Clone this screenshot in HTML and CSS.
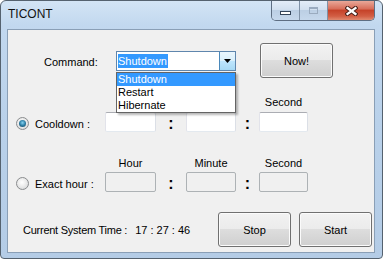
FILE: index.html
```html
<!DOCTYPE html>
<html lang="en">
  <head>
    <title>TICONT</title>
    <link rel="stylesheet" href="styles.css">
  </head>
  <body>
    <div class="window">
      <div class="titlebar">
        <span class="title">TICONT</span>
        <div class="caption-btns">
          <span class="cbtn min"><span class="min-glyph"></span></span>
          <span class="cbtn max"><span class="max-glyph"></span></span>
          <span class="cbtn close">
            <svg width="13" height="10" viewBox="0 0 13 10">
              <path d="M2.5 2 L10.5 8 M10.5 2 L2.5 8" stroke="#4a2119" stroke-width="4.2" stroke-linecap="square" fill="none" />
              <path d="M2.5 2 L10.5 8 M10.5 2 L2.5 8" stroke="#fff" stroke-width="2.2" stroke-linecap="square" fill="none" />
            </svg>
          </span>
        </div>
      </div>

      <div class="client">
        <div class="cmd-row">
          <span class="cmd-label">Command:</span>
          <div class="combo">
            <span class="combo-text"><span class="sel">Shutdown</span></span>
            <span class="combo-arrow">
              <svg width="7" height="4" viewBox="0 0 7 4"><path d="M0 0 H7 L3.5 4 Z" fill="#000" /></svg>
            </span>
            <ul class="combo-list">
              <li class="hot">Shutdown</li>
              <li>Restart</li>
              <li>Hibernate</li>
            </ul>
          </div>
          <button class="btn now">Now!</button>
        </div>

        <div class="timer cool">
          <!-- hour / minute labels sit under the open dropdown -->
          <span class="head h1 covered">Hour</span>
          <span class="head h2 covered">Minute</span>
          <span class="head h3">Second</span>
          <label class="opt"><span class="radio on"></span>Cooldown :</label>
          <span class="box"></span>
          <span class="colon">:</span>
          <span class="box"></span>
          <span class="colon">:</span>
          <span class="box"></span>
        </div>

        <div class="timer exact">
          <span class="head h1">Hour</span>
          <span class="head h2">Minute</span>
          <span class="head h3">Second</span>
          <label class="opt"><span class="radio"></span>Exact hour :</label>
          <span class="box off"></span>
          <span class="colon">:</span>
          <span class="box off"></span>
          <span class="colon">:</span>
          <span class="box off"></span>
        </div>

        <div class="bottom-row">
          <span class="sys-label">Current System Time :</span>
          <span class="sys-time">17 : 27 : 46</span>
          <button class="btn stop">Stop</button>
          <button class="btn start">Start</button>
        </div>
      </div>
    </div>
  </body>
</html>
```

FILE: styles.css
```css
body {
  margin: 0;
  font-family: "Liberation Sans", Arial, sans-serif;
  font-size: 11px;
  color: #000;
}
.window {
  box-sizing: border-box;
  width: 383px;
  height: 259px;
  border: 1px solid #55626f;
  border-radius: 6px 6px 4px 4px;
  background: linear-gradient(to bottom, #d3e4f5 0px, #c2d8ef 24px, #b9d1ea 120px, #b4cce6 100%);
  display: flex;
  flex-direction: column;
  overflow: hidden;
}
.titlebar {
  height: 28px;
  flex-shrink: 0;
  display: flex;
  align-items: flex-start;
}
.title {
  margin: 6px 0 0 7px;
  font-size: 12px;
  line-height: 14px;
  color: #111;
}
.caption-btns {
  margin-left: auto;
  margin-right: 7px;
  height: 19px;
  display: flex;
  border: 1px solid #5e6e82;
  border-top: none;
  border-radius: 0 0 5px 5px;
  overflow: hidden;
}
.cbtn {
  display: flex;
  justify-content: center;
  align-items: center;
  height: 19px;
}
.min,
.max {
  width: 27px;
  background: linear-gradient(to bottom, #e3edf8 0%, #d2e0ef 45%, #bccfe4 50%, #c6d8ec 100%);
  border-right: 1px solid #7f91a6;
}
.min {
  align-items: flex-end;
}
.min-glyph {
  width: 9px;
  height: 2px;
  margin-bottom: 5px;
  border: 1px solid #34455a;
  background: #fff;
}
.max-glyph {
  width: 7px;
  height: 5px;
  border: 1px solid #9aabbf;
  box-shadow: inset 0 1px 0 #9aabbf;
  margin-bottom: 1px;
}
.close {
  width: 46px;
  background: linear-gradient(to bottom, #e9a899 0%, #d8705c 40%, #c6432a 50%, #d25e44 80%, #e08a70 100%);
}

.client {
  flex: 1;
  margin: 0 7px 5px 6px;
  border: 1px solid #8a9fb6;
  background: #f0f0f0;
  padding-top: 13px;
  display: flex;
  flex-direction: column;
}
.cmd-row {
  height: 35px;
  display: flex;
  align-items: center;
}
.cmd-label {
  margin-left: 36px;
  width: 72px;
  padding-top: 2px;
}
.combo {
  position: relative;
  box-sizing: border-box;
  width: 120px;
  height: 20px;
  border: 1px solid #5f86ad;
  background: #fff;
  display: flex;
}
.combo-text {
  flex: 1;
  display: flex;
  align-items: center;
  padding-left: 1px;
}
.sel {
  background: #3399ff;
  color: #fff;
  line-height: 14px;
  padding-right: 1px;
}
.combo-arrow {
  width: 15px;
  display: flex;
  justify-content: center;
  align-items: center;
  border-left: 1px solid #4a88ba;
  background: linear-gradient(to bottom, #eaf6fd 0%, #d9f0fc 50%, #bee6fd 50%, #a7d9f5 100%);
}
.combo-list {
  position: absolute;
  z-index: 2;
  top: 20px;
  left: -1px;
  width: 120px;
  box-sizing: border-box;
  margin: 0;
  padding: 0;
  list-style: none;
  background: #fff;
  border: 1px solid #646464;
  box-shadow: 2px 2px 2px rgba(0, 0, 0, 0.28);
}
.combo-list li {
  line-height: 13px;
  padding-left: 1px;
}
.combo-list li.hot {
  background: #3399ff;
  color: #fff;
}
.btn {
  box-sizing: border-box;
  width: 73px;
  height: 35px;
  padding: 0;
  font-family: "Liberation Sans", Arial, sans-serif;
  font-size: 11px;
  color: #000;
  border: 1px solid #707070;
  border-radius: 3px;
  background: linear-gradient(to bottom, #f2f2f2 0%, #ebebeb 50%, #dddddd 50%, #cfcfcf 100%);
  box-shadow: inset 0 0 0 1px #fbfbfb;
}
.now {
  margin-left: 24px;
}

.timer {
  display: grid;
  grid-template-columns: 97px 51px 30px 50px 23px 49px;
  grid-template-rows: 14px 20px;
  row-gap: 3px;
}
.cool {
  margin-top: 17px;
}
.exact {
  margin-top: 24px;
  row-gap: 2px;
}
.head {
  grid-row: 1;
  text-align: center;
  line-height: 14px;
}
.head.covered {
  visibility: hidden;
}
.h1 {
  grid-column: 2;
}
.h2 {
  grid-column: 4;
}
.h3 {
  grid-column: 6;
}
.timer > :not(.head) {
  grid-row: 2;
}
.opt {
  display: flex;
  align-items: center;
  padding-left: 8px;
  padding-top: 3px;
}
.radio {
  position: relative;
  box-sizing: border-box;
  width: 13px;
  height: 13px;
  margin-right: 6px;
  border-radius: 50%;
  border: 1px solid #8a8c8e;
  background: radial-gradient(circle at 45% 40%, #ffffff 0%, #eeeeee 40%, #cfd1d3 100%);
}
.radio.on::after {
  content: "";
  position: absolute;
  left: 2px;
  top: 2px;
  width: 7px;
  height: 7px;
  border-radius: 50%;
  background: radial-gradient(circle at 50% 40%, #86d3f2 0%, #2d7fa6 50%, #173f55 100%);
}
.box {
  box-sizing: border-box;
  height: 20px;
  background: #fff;
  border: 1px solid;
  border-color: #abadb3 #dbdfe6 #e3e9ef #e2e3ea;
  border-radius: 2px;
}
.box.off {
  background: #f0f0f0;
  border-color: #adb2b5;
}
.colon {
  text-align: center;
  font-size: 16px;
  font-weight: bold;
  line-height: 24px;
}

.bottom-row {
  margin-top: 20px;
  height: 35px;
  display: flex;
  align-items: center;
}
.sys-label {
  margin-left: 15px;
  letter-spacing: -0.25px;
}
.sys-time {
  margin-left: 8px;
}
.stop {
  margin-left: auto;
}
.start {
  margin-left: 8px;
  margin-right: 2px;
}
```
